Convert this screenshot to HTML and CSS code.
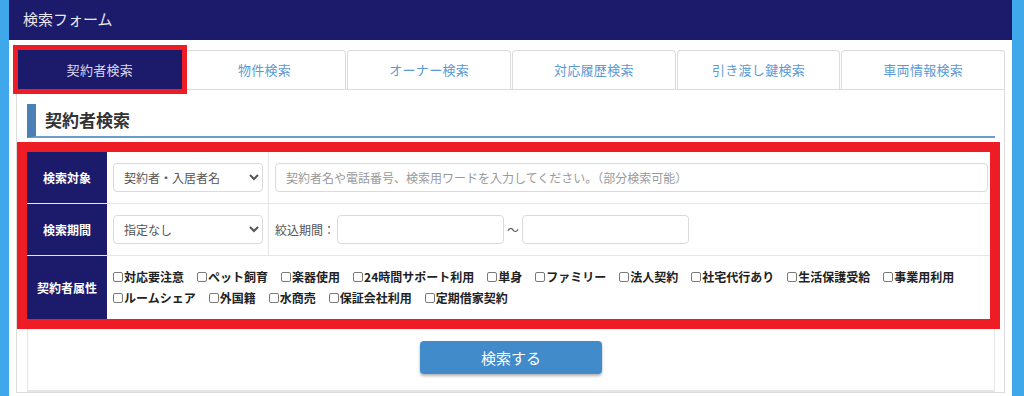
FILE: index.html
```html
<!DOCTYPE html>
<html lang="ja">
<head>
    <meta charset="UTF-8">
    <meta name="viewport" content="width=device-width, initial-scale=1.0">
    <title>検索フォーム</title>
    <link rel="stylesheet" href="styles.css">
</head>
<body>
    <div class="page">
        <div class="header">検索フォーム</div>
        <ul class="tabs">
            <li class="tab active">契約者検索</li>
            <li class="tab">物件検索</li>
            <li class="tab">オーナー検索</li>
            <li class="tab">対応履歴検索</li>
            <li class="tab">引き渡し鍵検索</li>
            <li class="tab">車両情報検索</li>
        </ul>
        <div class="panel">
            <h2 class="section-title">契約者検索</h2>
            <table class="search-table">
                <tr>
                    <th>検索対象</th>
                    <td class="col-select">
                        <select>
                            <option>契約者・入居者名</option>
                        </select>
                    </td>
                    <td>
                        <input type="text" class="keyword" placeholder="契約者名や電話番号、検索用ワードを入力してください。（部分検索可能）">
                    </td>
                </tr>
                <tr>
                    <th>検索期間</th>
                    <td class="col-select">
                        <select>
                            <option>指定なし</option>
                        </select>
                    </td>
                    <td>
                        <div class="period">
                            <span>絞込期間：</span>
                            <input type="text" class="date">
                            <span class="tilde">〜</span>
                            <input type="text" class="date">
                        </div>
                    </td>
                </tr>
                <tr>
                    <th>契約者属性</th>
                    <td colspan="2">
                        <div class="checks">
                            <label><input type="checkbox">対応要注意</label>
                            <label><input type="checkbox">ペット飼育</label>
                            <label><input type="checkbox">楽器使用</label>
                            <label><input type="checkbox">24時間サポート利用</label>
                            <label><input type="checkbox">単身</label>
                            <label><input type="checkbox">ファミリー</label>
                            <label><input type="checkbox">法人契約</label>
                            <label><input type="checkbox">社宅代行あり</label>
                            <label><input type="checkbox">生活保護受給</label>
                            <label><input type="checkbox">事業用利用</label>
                            <label><input type="checkbox">ルームシェア</label>
                            <label><input type="checkbox">外国籍</label>
                            <label><input type="checkbox">水商売</label>
                            <label><input type="checkbox">保証会社利用</label>
                            <label><input type="checkbox">定期借家契約</label>
                        </div>
                    </td>
                </tr>
            </table>
            <div class="actions">
                <button>検索する</button>
            </div>
        </div>
    </div>
</body>
</html>
```

FILE: styles.css
```css
body {
    margin: 0;
    background-color: #3ea8ea;
    font-family: "Noto Sans CJK JP", "Noto Sans", sans-serif;
    color: #333;
    overflow: hidden;
}
.page {
    margin-left: 9px;
    width: 1003px;
    min-height: 420px;
    background-color: #ffffff;
}
.header {
    height: 40px;
    line-height: 38px;
    padding-left: 14px;
    background-color: #1b1a6b;
    color: #e8e8f2;
    font-size: 15px;
}
.tabs {
    display: flex;
    gap: 1px;
    list-style: none;
    margin: 10px 7px 0 9px;
    padding: 0;
}
.tab {
    flex: 1;
    height: 38px;
    line-height: 38px;
    text-align: center;
    border: 1px solid #dcdcdc;
    border-bottom: none;
    border-radius: 4px 4px 0 0;
    font-size: 13px;
    color: #5b9ad6;
    letter-spacing: 0.3px;
}
.tab.active {
    background-color: #1b1a6b;
    border-color: #1b1a6b;
    border-radius: 0;
    color: #d8d8f0;
    outline: 5px solid #ee1c25;
    position: relative;
    z-index: 1;
}
.panel {
    margin: 0 7px;
    border: 1px solid #dcdcdc;
    padding: 14px 9px 0 10px;
}
.section-title {
    margin: 0;
    height: 32px;
    line-height: 32px;
    padding-left: 9px;
    border-left: 9px solid #4a80b6;
    border-bottom: 2px solid #6c9dcd;
    font-size: 17px;
    font-weight: bold;
    color: #333;
}
.search-table {
    width: calc(100% - 5px);
    margin-top: 14px;
    border-collapse: collapse;
    outline: 10px solid #ee1c25;
    position: relative;
    z-index: 1;
    background-color: #ffffff;
}
.search-table th {
    width: 80px;
    padding: 0;
    background-color: #1b1a6b;
    color: #ffffff;
    font-size: 12px;
    font-weight: bold;
    border-bottom: 1px solid #e6e6ee;
}
.search-table td {
    padding: 11px 2px 11px 6px;
    border-bottom: 1px solid #e6e6e6;
    font-size: 12px;
    color: #555;
}
.search-table tr:last-child th,
.search-table tr:last-child td {
    border-bottom: none;
}
.search-table td.col-select {
    width: 153px;
    border-right: 1px solid #e6e6e6;
}
select {
    width: 150px;
    height: 29px;
    padding: 0 6px;
    border: 1px solid #dadada;
    border-radius: 4px;
    background-color: #ffffff;
    font-family: inherit;
    font-size: 12px;
    color: #555;
}
input[type="text"] {
    box-sizing: border-box;
    height: 29px;
    border: 1px solid #dadada;
    border-radius: 4px;
    padding: 0 10px;
    font-family: inherit;
    font-size: 12px;
}
input::placeholder {
    color: #9a9a9a;
}
.keyword {
    width: 100%;
}
.period {
    display: flex;
    align-items: center;
}
.period span {
    margin-right: 2px;
}
.period .tilde {
    margin: 0 3px;
}
.date {
    width: 167px;
}
.search-table td .checks {
    display: flex;
    flex-wrap: wrap;
    column-gap: 13px;
    font-size: 12px;
    font-weight: bold;
    color: #222;
    line-height: 21px;
}
.checks label {
    display: flex;
    align-items: center;
}
.checks input {
    appearance: none;
    width: 10px;
    height: 10px;
    margin: 0 1px 0 0;
    border: 1px solid #7a7a7a;
    border-radius: 2px;
    background-color: #ffffff;
}
.search-table tr:last-child td {
    padding: 10px 6px 11px 6px;
}
.actions {
    border: 1px solid #e6e6e6;
    border-top: none;
    border-bottom-width: 2px;
    padding: 22px 0 16px;
    text-align: center;
}
button {
    width: 182px;
    height: 33px;
    background-color: #428bca;
    color: #ffffff;
    border: none;
    border-radius: 4px;
    box-shadow: 0 2px 3px rgba(0, 0, 0, 0.3);
    font-family: inherit;
    font-size: 15px;
    cursor: pointer;
}
```
